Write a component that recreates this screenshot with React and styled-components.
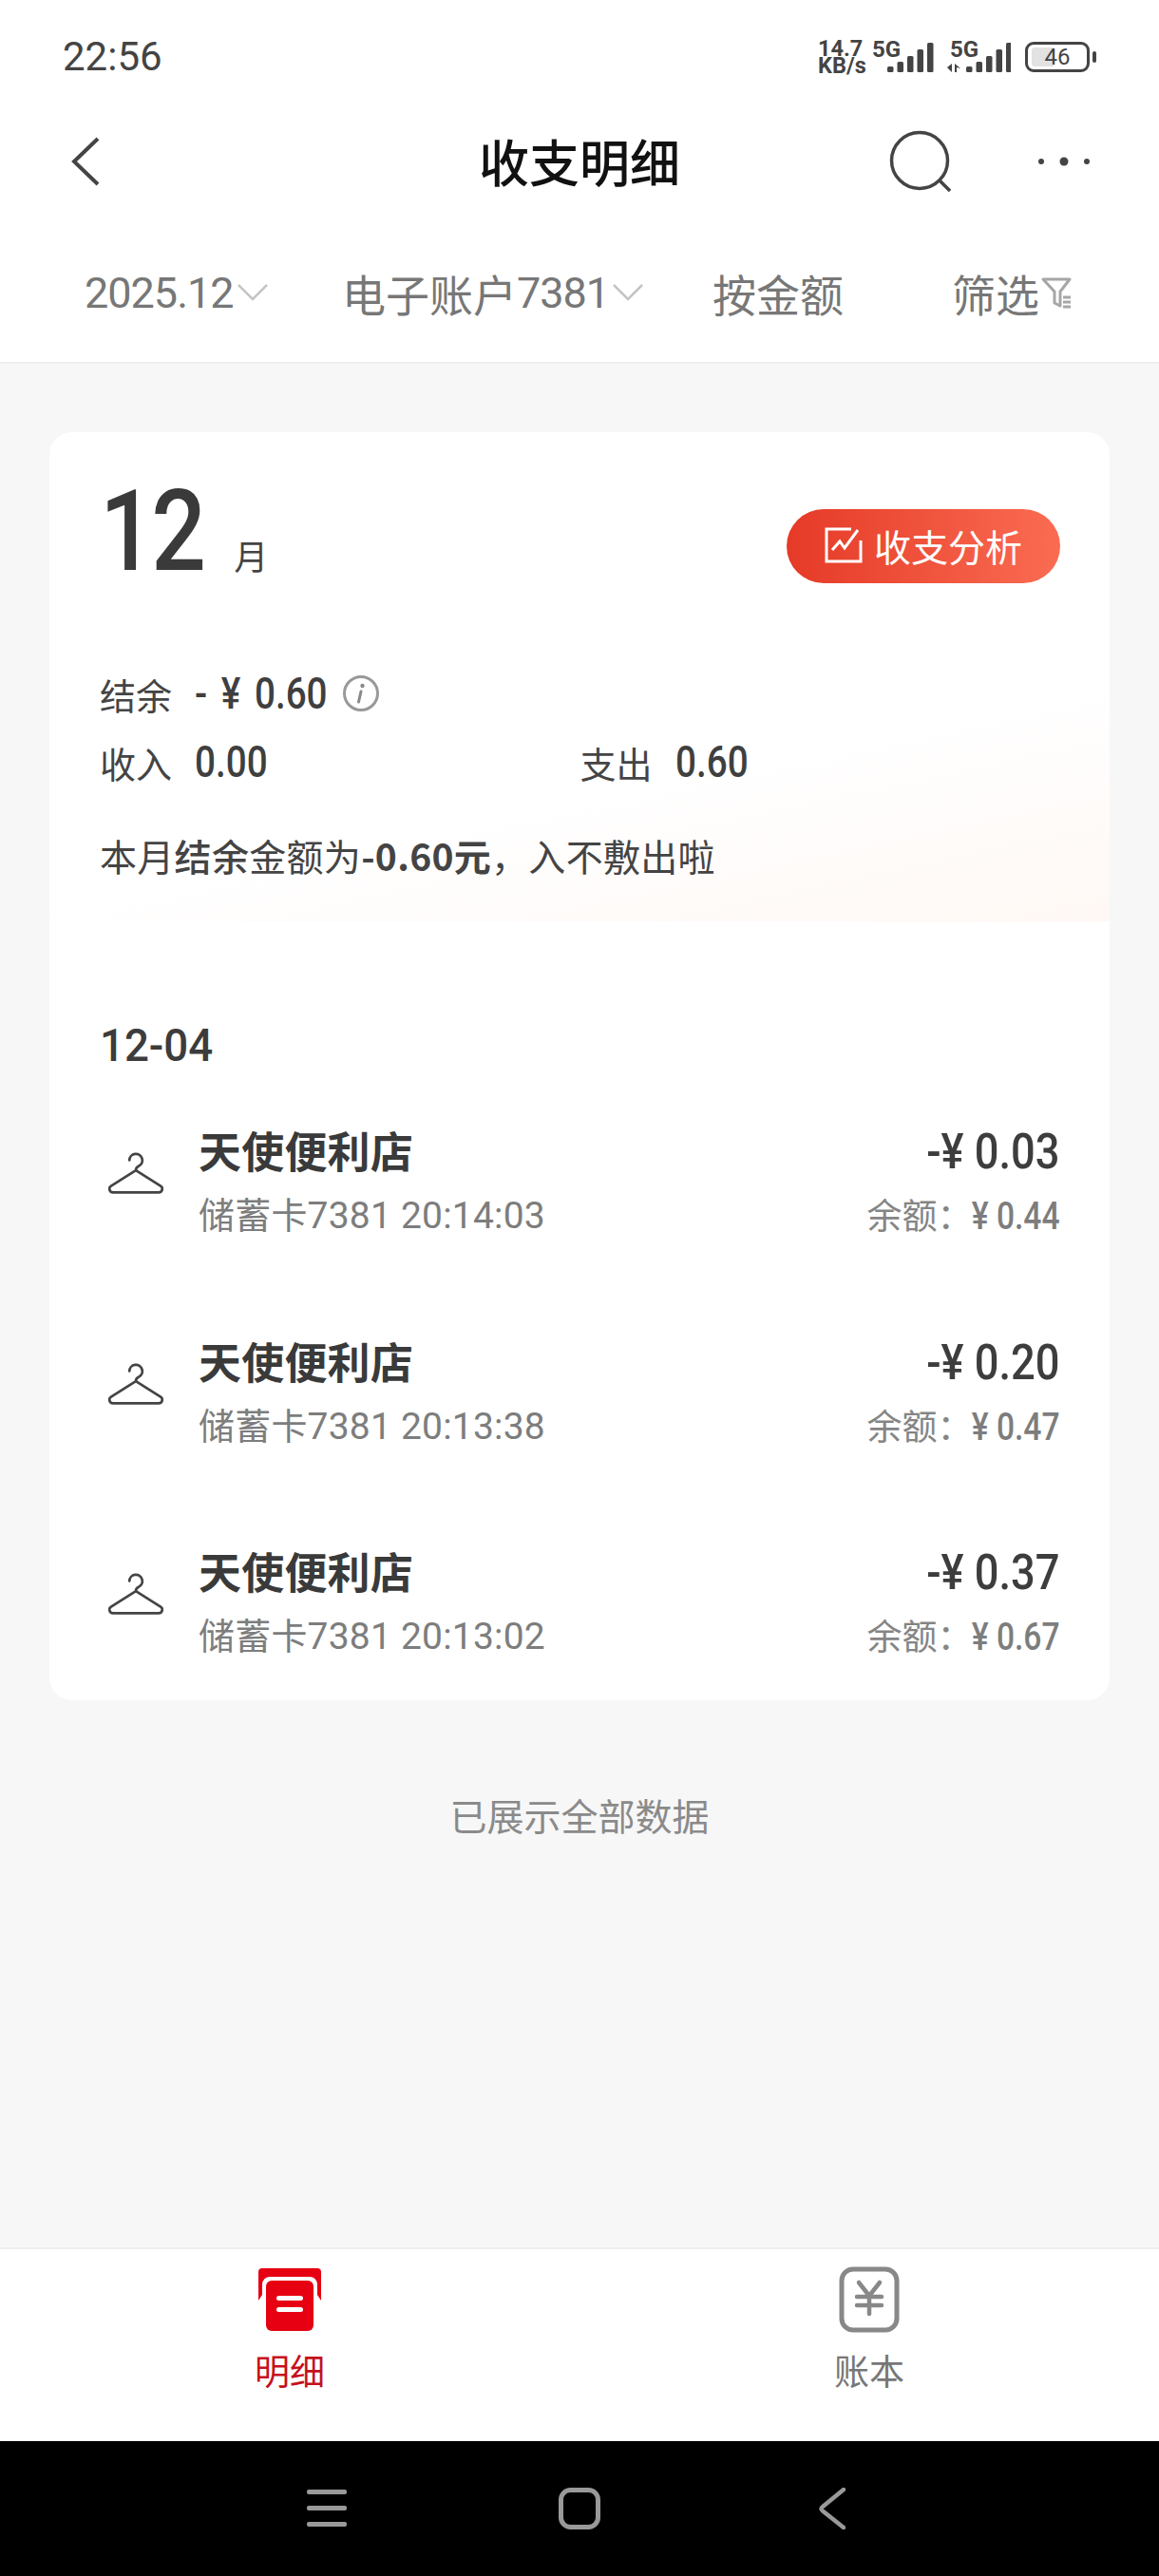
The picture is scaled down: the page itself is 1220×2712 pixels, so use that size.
import React from "react";
import styled, {createGlobalStyle} from "styled-components";

const CJK = `"Noto Sans CJK SC", "Noto Sans", sans-serif`;
const NUM = `Roboto, "Noto Sans CJK SC", sans-serif`;

const GlobalStyle = createGlobalStyle`
    html, body {
        margin: 0;
        padding: 0;
        background: #fff;
    }
    * {
        box-sizing: border-box;
    }
`;

const Page = styled.div`
    width: 1220px;
    height: 2712px;
    display: flex;
    flex-direction: column;
    font-family: ${CJK};
    color: #3c3c3c;
    background: #fff;
    overflow: hidden;
`;

const StatusBar = styled.div`
    height: 118px;
    padding: 2px 73px 0 66px;
    display: flex;
    align-items: center;
    justify-content: space-between;
`;

const Clock = styled.span`
    font-family: Roboto, sans-serif;
    font-size: 42px;
    line-height: 50px;
    color: #444;
`;

const StatusIcons = styled.div`
    display: flex;
    align-items: center;
`;

const NetSpeed = styled.div`
    width: 52px;
    font-family: Roboto, sans-serif;
    font-weight: 700;
    font-size: 23.5px;
    line-height: 18px;
    color: #444;
    white-space: nowrap;
`;

const SignalBox = styled.div`
    position: relative;
    width: 68px;
    height: 34px;
    margin-left: ${props => props.$left}px;
`;

const SignalLabel = styled.span`
    position: absolute;
    left: ${props => props.$left}px;
    top: -6px;
    font-family: Roboto, sans-serif;
    font-weight: 700;
    font-size: 24px;
    line-height: 30px;
    color: #444;
`;

const Battery = styled.div`
    position: relative;
    width: 68px;
    height: 32px;
    margin-left: 15px;
    border: 3px solid #444;
    border-radius: 9px;
    display: flex;
    align-items: center;
    justify-content: center;
    font-family: Roboto, sans-serif;
    font-size: 24px;
    color: #444;
    &::before {
        content: "";
        position: absolute;
        left: 4px;
        top: 3px;
        bottom: 3px;
        width: 24px;
        background: #e2e2e2;
        border-radius: 3px;
    }
    &::after {
        content: "";
        position: absolute;
        right: -10px;
        top: 7px;
        width: 4px;
        height: 12px;
        background: #444;
        border-radius: 2px;
    }
`;

const BatteryLevel = styled.span`
    position: relative;
`;

const NavBar = styled.div`
    height: 104px;
    display: grid;
    grid-template-columns: 1fr auto 1fr;
    align-items: center;
    padding: 0 75px;
`;

const Title = styled.h1`
    margin: 0 0 2px;
    font-size: 53px;
    line-height: 64px;
    font-weight: 500;
    color: #111;
`;

const NavActions = styled.div`
    display: flex;
    justify-content: flex-end;
    align-items: center;
    gap: 90px;
    margin-right: -3px;
`;

const FilterRow = styled.div`
    height: 161px;
    padding: 53px 0 0 89px;
    display: grid;
    grid-template-columns: 271px 390px 252px auto;
    align-items: start;
    border-bottom: 2px solid #eeeeee;
`;

const FilterItem = styled.div`
    display: flex;
    align-items: center;
    height: 66px;
    font-size: 46px;
    color: #777;
`;

const FilterNum = styled.span`
    font-family: Roboto, sans-serif;
    font-size: 45px;
    letter-spacing: -1px;
`;

const Main = styled.div`
    flex: 1;
    background: #f7f7f7;
    padding: 72px 52px 0;
`;

const Card = styled.div`
    background: #fff;
    border-radius: 24px;
    padding-bottom: 37px;
`;

const CardHead = styled.div`
    height: 245px;
    padding: 0 52px 0 53px;
    display: flex;
    align-items: flex-start;
    justify-content: space-between;
`;

const MonthBlock = styled.div`
    display: flex;
    align-items: baseline;
    margin-top: 35px;
    line-height: 140px;
`;

const MonthNum = styled.span`
    display: inline-block;
    font-family: Roboto, sans-serif;
    font-weight: 500;
    font-size: 118px;
    letter-spacing: -4px;
    color: #3a3a3a;
    transform: scaleX(0.86);
    transform-origin: left center;
`;

const MonthUnit = styled.span`
    margin-left: 15px;
    font-size: 36px;
    color: #444;
`;

const AnalysisButton = styled.button`
    margin-top: 81px;
    width: 288px;
    height: 78px;
    border: 0;
    border-radius: 39px;
    background: linear-gradient(90deg, #e53a27, #fa6c52);
    color: #fff;
    font-family: ${CJK};
    font-size: 39px;
    line-height: 44px;
    display: flex;
    align-items: center;
    justify-content: center;
    gap: 12px;
    padding: 0 0 3px;
`;

const Summary = styled.div`
    height: 270px;
    padding: 0 52px 0 53px;
    background: linear-gradient(168deg, rgba(255, 255, 255, 0) 50%, #fff8f5 100%);
`;

const SummaryLine = styled.div`
    display: flex;
    align-items: center;
    height: 60px;
    font-size: 38px;
    color: #444;
    margin-top: ${props => props.$top}px;
`;

const SummaryCell = styled.div`
    display: flex;
    align-items: center;
    width: 508px;
`;

// digits in this app are a narrow face, so the Roboto ones get squeezed
const Amount = styled.span`
    display: inline-block;
    margin-left: ${props => props.$left}px;
    font-family: ${NUM};
    font-weight: 500;
    font-size: 46px;
    word-spacing: 6px;
    color: #3f3f3f;
    transform: scaleX(0.84);
    transform-origin: left center;
`;

const InfoIcon = styled.span`
    margin-left: -10px;
    display: flex;
`;

const Remark = styled.div`
    margin-top: 38px;
    height: 60px;
    line-height: 60px;
    font-size: 39px;
    letter-spacing: 0.3px;
    color: #444;
    strong {
        font-weight: 500;
    }
    b {
        font-weight: 600;
    }
`;

const DateLabel = styled.div`
    margin: 101px 0 47px 53px;
    height: 60px;
    line-height: 60px;
    font-family: Roboto, sans-serif;
    font-weight: 500;
    font-size: 48px;
    color: #3c3c3c;
    transform: scaleX(0.95);
    transform-origin: left center;
`;

const TxList = styled.div`
    display: flex;
    flex-direction: column;
    gap: 89.5px;
    padding: 0 52px 0 62px;
`;

const TxRow = styled.div`
    display: grid;
    grid-template-columns: 95px 1fr auto;
    align-items: center;
    height: 132px;
`;

const TxIcon = styled.div`
    display: flex;
    margin-top: -18px;
`;

const TxTitle = styled.div`
    height: 66px;
    line-height: 66px;
    font-size: 45px;
    font-weight: 700;
    letter-spacing: 0.2px;
    color: #3a3a3a;
`;

const TxSub = styled.div`
    height: 66px;
    line-height: 66px;
    font-size: 38px;
    letter-spacing: 0.2px;
    color: #7d7d7d;
`;

const TxSubNum = styled.span`
    font-family: Roboto, sans-serif;
    font-size: 39px;
`;

const TxRight = styled.div`
    text-align: right;
`;

const TxAmount = styled.div`
    height: 66px;
    line-height: 70px;
    font-family: ${NUM};
    font-weight: 500;
    font-size: 52px;
    color: #3d3d3d;
    transform: scaleX(0.87);
    transform-origin: right center;
`;

const TxBalance = styled.div`
    height: 66px;
    line-height: 68px;
    font-size: 37px;
    color: #858585;
`;

const BalanceNum = styled.span`
    display: inline-block;
    margin-left: -18px;
    font-family: ${NUM};
    font-weight: 500;
    font-size: 40px;
    color: #7d7d7d;
    transform: scaleX(0.84);
    transform-origin: right center;
`;

const EndNote = styled.div`
    margin-top: 90px;
    height: 60px;
    line-height: 60px;
    text-align: center;
    font-size: 39px;
    color: #8a8a8a;
`;

const TabBar = styled.div`
    height: 204px;
    display: grid;
    grid-template-columns: 1fr 1fr;
    border-top: 2px solid #eeeeee;
    background: #fff;
`;

const Tab = styled.div`
    display: flex;
    flex-direction: column;
    align-items: center;
    padding-top: 18px;
    font-size: 37px;
    line-height: 50px;
    color: ${props => (props.$active ? "#c6101d" : "#777")};
`;

const TabIcon = styled.div`
    height: 70px;
    margin-bottom: 14px;
    display: flex;
    align-items: center;
`;

const SystemBar = styled.div`
    height: 142px;
    background: #000;
    display: grid;
    grid-template-columns: repeat(3, 266px);
    justify-content: center;
    justify-items: center;
    align-items: center;
`;

const Signal = ({arrows, left}) => (
    <SignalBox $left={left}>
        <SignalLabel $left={arrows ? 4 : 0}>5G</SignalLabel>
        <svg width="68" height="34" viewBox="0 0 68 34">
            {arrows && <path d="M1 28l5-4v9zM9 24v9h2v-5l4 1-6-5z" fill="#444"/>}
            {[0, 10.500, 21, 31.500, 42].map((x, i) => {
                const h = [6, 11, 17, 24, 31][i];
                const start = (arrows ? 21 : 16) + x;
                return <rect key={x} x={start} y={33 - h} width="6.500" height={h} rx="1.500" fill="#444"/>;
            })}
        </svg>
    </SignalBox>
);

const Chevron = () => (
    <svg width="37" height="20" viewBox="0 0 37 20" fill="none">
        <path d="M5 2l15 15L35 2" stroke="#c4c4c4" strokeWidth="2.500"/>
    </svg>
);

const Funnel = () => (
    <svg width="36" height="36" viewBox="0 0 36 36" fill="none">
        <path d="M4 4h28l-10 13v15l-6-3V17z" stroke="#a6a6a6" strokeWidth="3" strokeLinejoin="round"/>
        <path d="M25 23h8M25 28h8M25 33h8" stroke="#a6a6a6" strokeWidth="3"/>
    </svg>
);

const Hanger = () => (
    <svg width="58" height="46" viewBox="0 0 60 46" fill="none" stroke="#444" strokeWidth="2.800" strokeLinecap="round" strokeLinejoin="round">
        <path d="M23 9a7 7 0 1 1 10 6.500c-2 1-3 2-3 4.500L57 37c3 2 2 7-2 7H5c-4 0-5-5-2-7l27-17"/>
    </svg>
);

const transactions = [
    {time: "20:14:03", amount: "0.03", balance: "0.44"},
    {time: "20:13:38", amount: "0.20", balance: "0.47"},
    {time: "20:13:02", amount: "0.37", balance: "0.67"},
];

export default function App() {
    return (
        <Page>
            <GlobalStyle/>
            <StatusBar>
                <Clock>22:56</Clock>
                <StatusIcons>
                    <NetSpeed>14.7<br/>KB/s</NetSpeed>
                    <Signal left={5}/>
                    <Signal arrows left={10}/>
                    <Battery><BatteryLevel>46</BatteryLevel></Battery>
                </StatusIcons>
            </StatusBar>

            <NavBar>
                <svg width="30" height="52" viewBox="0 0 30 52" fill="none">
                    <path d="M28 2L3 26l25 24" stroke="#444" strokeWidth="4"/>
                </svg>
                <Title>收支明细</Title>
                <NavActions>
                    <svg width="66" height="66" viewBox="0 0 66 66" fill="none" stroke="#444" strokeWidth="3.500">
                        <circle cx="32" cy="32" r="29.500"/>
                        <path d="M53 53l11 11"/>
                    </svg>
                    <svg width="56" height="12" viewBox="0 0 56 12" fill="#444">
                        <circle cx="4" cy="6" r="3"/>
                        <circle cx="28" cy="6" r="4.500"/>
                        <circle cx="52" cy="6" r="3"/>
                    </svg>
                </NavActions>
            </NavBar>

            <FilterRow>
                <FilterItem><FilterNum>2025.12</FilterNum><Chevron/></FilterItem>
                <FilterItem>电子账户<FilterNum>7381</FilterNum><Chevron/></FilterItem>
                <FilterItem>按金额</FilterItem>
                <FilterItem>筛选<Funnel/></FilterItem>
            </FilterRow>

            <Main>
                <Card>
                    <CardHead>
                        <MonthBlock>
                            <MonthNum>12</MonthNum>
                            <MonthUnit>月</MonthUnit>
                        </MonthBlock>
                        <AnalysisButton>
                            <svg width="40" height="38" viewBox="0 0 40 38" fill="none" stroke="#fff" strokeWidth="3">
                                <path d="M28 2H2v34h36V14"/>
                                <path d="M8 24l8-9 5 7L35 3"/>
                            </svg>
                            收支分析
                        </AnalysisButton>
                    </CardHead>

                    <Summary>
                        <SummaryLine $top={0}>
                            结余
                            <Amount $left={24}>- ¥ 0.60</Amount>
                            <InfoIcon>
                                <svg width="38" height="38" viewBox="0 0 38 38" fill="none">
                                    <circle cx="19" cy="19" r="17.500" stroke="#999" strokeWidth="3"/>
                                    <circle cx="20.500" cy="11" r="2.200" fill="#888"/>
                                    <path d="M19 17l-2.500 11" stroke="#888" strokeWidth="3" strokeLinecap="round"/>
                                </svg>
                            </InfoIcon>
                        </SummaryLine>
                        <SummaryLine $top={12}>
                            <SummaryCell>收入<Amount $left={24}>0.00</Amount></SummaryCell>
                            <SummaryCell>支出<Amount $left={24}>0.60</Amount></SummaryCell>
                        </SummaryLine>
                        <Remark>本月<strong>结余</strong>金额为<b>-0.60元</b>，入不敷出啦</Remark>
                    </Summary>

                    <DateLabel>12-04</DateLabel>

                    <TxList>
                        {transactions.map(tx =>
                            <TxRow key={tx.time}>
                                <TxIcon><Hanger/></TxIcon>
                                <div>
                                    <TxTitle>天使便利店</TxTitle>
                                    <TxSub>储蓄卡<TxSubNum>7381 {tx.time}</TxSubNum></TxSub>
                                </div>
                                <TxRight>
                                    <TxAmount>-¥ {tx.amount}</TxAmount>
                                    <TxBalance>余额：<BalanceNum>¥ {tx.balance}</BalanceNum></TxBalance>
                                </TxRight>
                            </TxRow>
                        )}
                    </TxList>
                </Card>
                <EndNote>已展示全部数据</EndNote>
            </Main>

            <TabBar>
                <Tab $active>
                    <TabIcon>
                        <svg width="66" height="66" viewBox="0 0 66 66">
                            <path d="M4 0h58a4 4 0 0 1 4 4v30l-4-6V17a8 8 0 0 0-8-8H12a8 8 0 0 0-8 8v11l-4 6V4a4 4 0 0 1 4-4z" fill="#e60012"/>
                            <rect x="8" y="13" width="50" height="53" rx="6" fill="#e60012"/>
                            <rect x="19" y="29" width="28" height="5" rx="2.500" fill="#fff"/>
                            <rect x="19" y="41" width="28" height="5" rx="2.500" fill="#fff"/>
                        </svg>
                    </TabIcon>
                    明细
                </Tab>
                <Tab>
                    <TabIcon>
                        <svg width="66" height="70" viewBox="0 0 66 70" fill="none" stroke="#888">
                            <rect x="4" y="3" width="58" height="64" rx="12" strokeWidth="5"/>
                            <path d="M22 17l11 14 11-14M33 31v19M20 32h26M20 41h26" strokeWidth="4.500" strokeLinecap="round"/>
                        </svg>
                    </TabIcon>
                    账本
                </Tab>
            </TabBar>

            <SystemBar>
                <svg width="42" height="40" viewBox="0 0 42 40" fill="#999">
                    <rect y="0" width="42" height="5" rx="2"/>
                    <rect y="17" width="42" height="5" rx="2"/>
                    <rect y="34" width="42" height="5" rx="2"/>
                </svg>
                <svg width="44" height="44" viewBox="0 0 44 44" fill="none">
                    <rect x="2.500" y="2.500" width="39" height="39" rx="10" stroke="#999" strokeWidth="5"/>
                </svg>
                <svg width="28" height="44" viewBox="0 0 28 44" fill="none">
                    <path d="M26 2L4 20c-2 1.500-2 3 0 4.500L26 42" stroke="#999" strokeWidth="4.500" strokeLinecap="round"/>
                </svg>
            </SystemBar>
        </Page>
    );
}
